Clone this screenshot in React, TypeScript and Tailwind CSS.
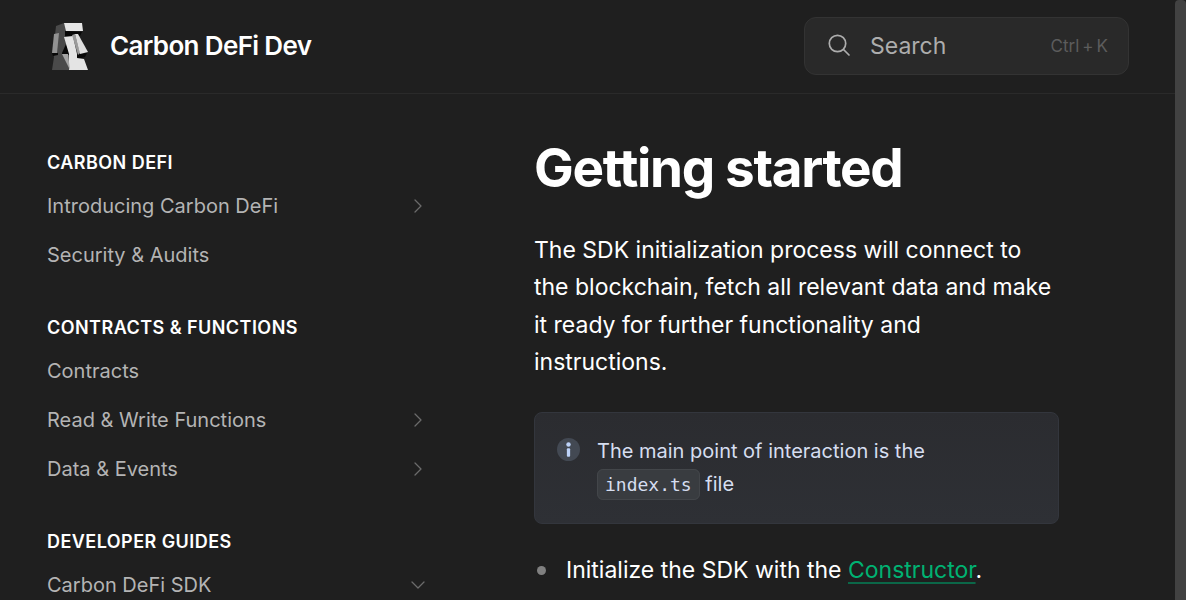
type NavItem = { label: string; expand?: 'closed' | 'open' };
type NavGroup = { title: string; items: NavItem[] };

const groups: NavGroup[] = [
  {
    title: 'Carbon DeFi',
    items: [{ label: 'Introducing Carbon DeFi', expand: 'closed' }, { label: 'Security & Audits' }],
  },
  {
    title: 'Contracts & Functions',
    items: [
      { label: 'Contracts' },
      { label: 'Read & Write Functions', expand: 'closed' },
      { label: 'Data & Events', expand: 'closed' },
    ],
  },
  {
    title: 'Developer Guides',
    items: [{ label: 'Carbon DeFi SDK', expand: 'open' }],
  },
];

function Logo() {
  return (
    <svg viewBox="0 0 36 47" className="h-[47px] w-9 shrink-0" aria-hidden="true">
      <path d="M4 3 12 0 15 8 13 14 17 31 18 47H0L2 34 1 30 3 12Z" fill="#4a4a4a" />
      <path d="M13 8 30 9 28 13 13 13ZM0 30H6L6 32 1 33ZM10 30 14 21 18 30V32L10 31ZM24 31 35 30 33 34 26 36Z" fill="#080808" />
      <path d="M12 0H30L31 8H14Z" fill="#e6e6e6" />
      <path d="M12 14 21 13 25 31 25 35 32 36 36 47H17L17 31Z" fill="#e4e4e4" />
      <path d="M10 31H16L18 47Z" fill="#a4a4a4" />
      <path d="M2 11 7 10 5 30H0Z" fill="#929292" />
      <path d="M20 12 23 11 28 30 26 32Z" fill="#9a9a9a" />
      <path d="M23 11 26 11 36 29 28 31Z" fill="#dedede" />
    </svg>
  );
}

function Chevron({ open }: { open: boolean }) {
  return (
    <svg
      viewBox="0 0 16 16"
      className="size-4 shrink-0 text-[#6b6b6b]"
      fill="none"
      stroke="currentColor"
      strokeWidth="1.3"
      strokeLinecap="round"
      strokeLinejoin="round"
      aria-hidden="true"
    >
      <path d={open ? 'M2 5 8 11 14 5' : 'M5 2 11 8 5 14'} />
    </svg>
  );
}

function Header() {
  return (
    <header className="flex items-center justify-between border-b border-[#2a2a2a] pt-[17px] pr-[46px] pb-[18px] pl-[52px]">
      <a href="#home" className="flex items-center gap-[22px] text-[26px] font-semibold tracking-tight text-white">
        <Logo />
        <span className="pb-0.5">Carbon DeFi Dev</span>
      </a>
      <label className="flex h-[58px] w-[325px] items-center rounded-xl border border-[#333333] bg-[#292929] px-5">
        <svg
          viewBox="0 0 28 28"
          className="size-7 shrink-0 text-[#adadad]"
          fill="none"
          stroke="currentColor"
          strokeWidth="1.7"
          strokeLinecap="round"
          aria-hidden="true"
        >
          <circle cx="12.5" cy="11.5" r="8.2" />
          <path d="M18.5 17.5 24 23" />
        </svg>
        <input
          type="search"
          aria-label="Search"
          placeholder="Search"
          className="ml-[17px] w-0 min-w-0 flex-1 bg-transparent text-[23px] text-white outline-none placeholder:text-[#adadad]"
        />
        <kbd className="flex gap-[3px] pt-0.5 font-['Inter',sans-serif] text-[17px] text-[#5c5c5c]">
          <span>Ctrl</span>
          <span>+</span>
          <span>K</span>
        </kbd>
      </label>
    </header>
  );
}

function Sidebar() {
  return (
    <nav className="flex w-[379px] shrink-0 flex-col gap-[27px] pt-[47px]" aria-label="Pages">
      {groups.map((group) => (
        <section key={group.title}>
          <h2 className="flex h-10 items-center pt-1 text-lg font-semibold tracking-wide text-white uppercase">
            {group.title}
          </h2>
          <ul>
            {group.items.map((item) => (
              <li key={item.label}>
                <a
                  href="#page"
                  className="flex h-[49px] items-center justify-between text-xl text-[#b4b4b4]"
                >
                  {item.label}
                  {item.expand && <Chevron open={item.expand === 'open'} />}
                </a>
              </li>
            ))}
          </ul>
        </section>
      ))}
    </nav>
  );
}

function Content() {
  return (
    <main className="min-w-0 flex-1 pt-10">
      <h1 className="text-[53px] leading-[68px] font-bold tracking-tight text-white">Getting started</h1>
      <p className="mt-[30px] text-[23px] leading-relaxed text-white">
        The SDK initialization process will connect to the blockchain, fetch all relevant data and make it ready
        for further functionality and instructions.
      </p>
      <aside className="mt-[30px] flex gap-[17px] rounded-lg border border-[#33363d] bg-linear-to-b from-[#2b2c30] to-[#2e3035] py-[22px] pr-9 pl-[22px] text-[20px] leading-[33px] text-[#d6def0]">
        <svg viewBox="0 0 24 24" className="mt-[3px] size-[23px] shrink-0" aria-hidden="true">
          <circle cx="12" cy="12" r="12" fill="#434953" />
          <circle cx="12" cy="6.8" r="2.3" fill="#bdd3fa" />
          <rect x="10.3" y="10.8" width="3.4" height="8.8" rx="1" fill="#bdd3fa" />
        </svg>
        <p>
          The main point of interaction is the{' '}
          <code className="rounded-md border border-[#43464a] bg-[#393c40] px-[7px] py-1 font-['DejaVu_Sans_Mono',monospace] text-[18px] leading-none">
            index.ts
          </code>{' '}
          file
        </p>
      </aside>
      <ul className="mt-7 text-[23px] leading-relaxed text-white">
        <li className="flex items-center gap-5">
          <span className="ml-[3px] size-[9px] shrink-0 rounded-full bg-[#808080]" />
          <span>
            Initialize the SDK with the{' '}
            <a
              href="#constructor"
              className="text-[#00b272] underline decoration-[#0b6748] decoration-2 underline-offset-4"
            >
              Constructor
            </a>
            .
          </span>
        </li>
      </ul>
    </main>
  );
}

export default function App() {
  return (
    <div className="flex h-screen overflow-hidden bg-[#1f1f1f] font-['Inter',sans-serif]">
      <div className="min-w-0 flex-1">
        <Header />
        <div className="flex gap-[108px] pr-[116px] pl-[47px]">
          <Sidebar />
          <Content />
        </div>
      </div>
      <div className="w-[11px] shrink-0 rounded-t-sm bg-[#424242]" />
    </div>
  );
}
